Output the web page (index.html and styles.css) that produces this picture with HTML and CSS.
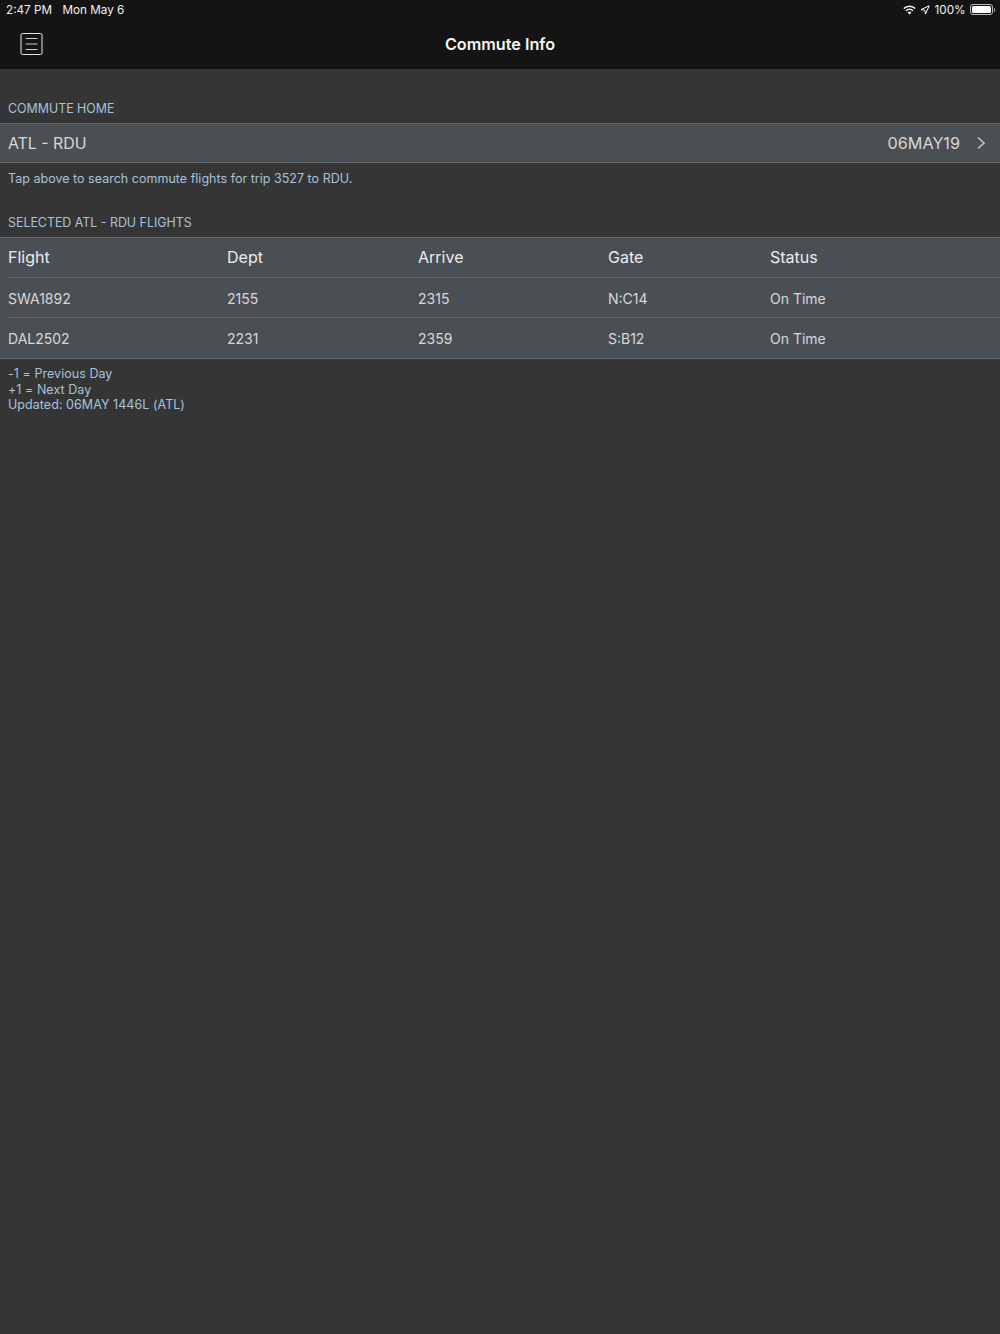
FILE: index.html
```html
<!DOCTYPE html>
<html lang="en">
<head>
<meta charset="utf-8">
<title>Commute Info</title>
<link rel="stylesheet" href="styles.css">
</head>
<body>
<header class="topbar">
  <div class="status">
    <div class="status-left"><span>2:47 PM</span><span>Mon May 6</span></div>
    <div class="status-right">
      <svg class="wifi" width="13" height="10" viewBox="0 0 16 12"><path d="M8 11.600 5.600 9a3.400 3.400 0 0 1 4.800 0Z" fill="#fff"/><path d="M3.700 6.900a6.200 6.200 0 0 1 8.600 0" fill="none" stroke="#fff" stroke-width="1.900"/><path d="M1 4.200a10 10 0 0 1 14 0" fill="none" stroke="#fff" stroke-width="1.900"/></svg>
      <svg class="loc" width="10" height="10" viewBox="0 0 10 10"><path d="M9.200.8 1 4.600l3.800.6.700 3.900Z" fill="none" stroke="#fff" stroke-width="1"/></svg>
      <span class="pct">100%</span>
      <span class="battery"><span class="battery-fill"></span></span><span class="battery-tip"></span>
    </div>
  </div>
  <nav class="nav">
    <svg class="menu" width="24" height="24" viewBox="0 0 24 24"><rect x="2" y="1.500" width="21" height="21" rx="1.500" fill="none" stroke="#e6e6e6" stroke-width="1"/><path d="M6.500 6.500h12M6.500 12h12M6.500 17.500h12" stroke="#cfcfcf" stroke-width="1"/></svg>
    <h1>Commute Info</h1>
  </nav>
</header>
<main>
  <h2 class="label first">COMMUTE HOME</h2>
  <div class="route">
    <span>ATL - RDU</span>
    <span class="route-right">06MAY19
      <svg class="chev" width="10" height="14" viewBox="0 0 10 14"><path d="M2 1.500 8 7 2 12.500" fill="none" stroke="#c4c4c4" stroke-width="1.600"/></svg>
    </span>
  </div>
  <p class="note">Tap above to search commute flights for trip 3527 to RDU.</p>
  <h2 class="label second">SELECTED ATL - RDU FLIGHTS</h2>
  <div class="table">
    <div class="row head"><span>Flight</span><span>Dept</span><span>Arrive</span><span>Gate</span><span>Status</span></div>
    <div class="row"><span>SWA1892</span><span>2155</span><span>2315</span><span>N:C14</span><span>On Time</span></div>
    <div class="row"><span>DAL2502</span><span>2231</span><span>2359</span><span>S:B12</span><span>On Time</span></div>
  </div>
  <p class="legend">-1 = Previous Day<br>+1 = Next Day<br>Updated: 06MAY 1446L (ATL)</p>
</main>
</body>
</html>
```

FILE: styles.css
```css
* { box-sizing: border-box; margin: 0; padding: 0; }
html, body { height: 100%; }
body {
  background: #353535;
  font-family: Inter, "Liberation Sans", sans-serif;
  overflow: hidden;
}
.topbar { height: 69px; background: #141414; color: #fff; }
.status {
  height: 19px;
  padding: 0 5px 0 6px;
  display: flex;
  justify-content: space-between;
  align-items: center;
  font-size: 11.700px;
  color: #f0f0f0;
}
.status-left { display: flex; gap: 10.500px; }
.status-right { display: flex; align-items: center; }
.wifi { margin-right: 4px; }
.loc { margin-right: 5px; }
.pct { margin-right: 4px; }
.battery {
  width: 23px; height: 11px;
  border: 1px solid #bbb;
  border-radius: 3px;
  padding: 1px;
  display: block;
}
.battery-fill { display: block; height: 100%; background: #fff; border-radius: 1.500px; }
.battery-tip { width: 1.500px; height: 4px; background: #aaa; border-radius: 0 1px 1px 0; margin-left: 1px; }
.nav {
  height: 50px;
  display: flex;
  align-items: center;
  justify-content: center;
  position: relative;
}
.menu { position: absolute; left: 19px; top: 13px; }
.nav h1 { font-size: 16.200px; font-weight: 600; color: #f4f4f4; }
.label {
  font-size: 12.400px;
  font-weight: 400;
  color: #a5c3dc;
  padding-left: 8px;
  line-height: 16px;
}
.label.first { margin-top: 32px; margin-bottom: 6px; }
.label.second { margin-top: 28px; margin-bottom: 6px; }
.route {
  height: 40px;
  background: #4a4f53;
  border-top: 1px solid #62676b;
  border-bottom: 1px solid #62676b;
  padding: 0 14px 0 8px;
  display: flex;
  align-items: center;
  justify-content: space-between;
  font-size: 15.900px;
  color: #d8d8d8;
}
.route-right { display: flex; align-items: center; gap: 16px; font-size: 16.200px; }
.note {
  font-size: 12.500px;
  letter-spacing: 0.020px;
  color: #a5c3dc;
  padding-left: 8px;
  line-height: 16px;
  margin-top: 8px;
}
.table {
  background: #4a4f53;
  border-top: 1px solid #62676b;
  border-bottom: 1px solid #62676b;
}
.row {
  height: 40px;
  margin-left: 8px;
  padding-top: 1px;
  display: grid;
  grid-template-columns: 219px 191px 190px 162px 1fr;
  align-items: center;
  font-size: 14px;
  color: #d8d8d8;
  border-bottom: 1px solid #62676b;
}
.row:last-child { border-bottom: 0; }
.row.head { font-size: 16px; color: #ececec; padding-top: 0; padding-bottom: 1px; }
.legend {
  font-size: 12.500px;
  letter-spacing: 0.050px;
  color: #a5c3dc;
  padding-left: 8px;
  line-height: 15.500px;
  margin-top: 7px;
}
```
